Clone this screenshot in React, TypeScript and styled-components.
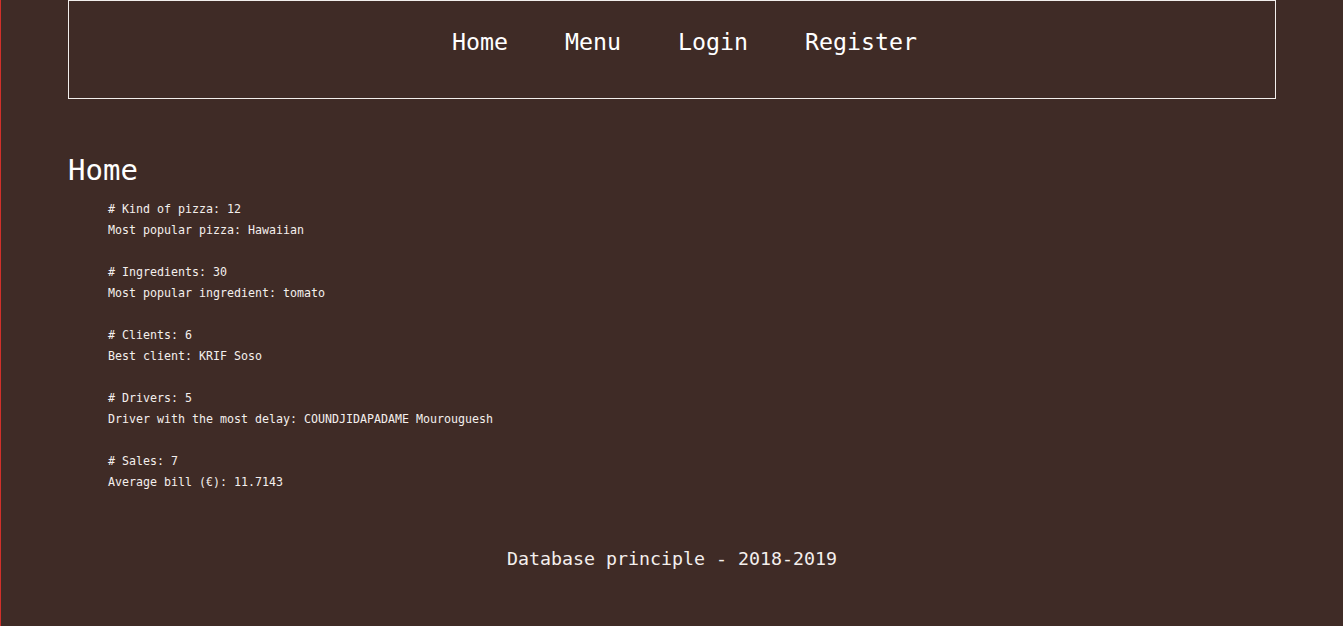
import styled, { createGlobalStyle } from "styled-components";

const GlobalStyle = createGlobalStyle`
  html, body {
    margin: 0;
    padding: 0;
  }

  body {
    background-color: #3f2b26;
    border-left: 1px solid #d0302a;
    min-height: 100vh;
    box-sizing: border-box;
    font-family: "DejaVu Sans Mono", "Liberation Mono", monospace;
    color: #fff;
  }
`;

const Container = styled.div`
  width: 90%;
  margin: 0 auto;
`;

const NavBar = styled.nav`
  box-sizing: border-box;
  height: 99px;
  border: 1px solid #f2eeec;
  padding: 27px 0 0 25px;
  display: flex;
  justify-content: center;
  align-items: flex-start;
  gap: 57px;
`;

const NavLink = styled.a`
  font-size: 23.25px;
  color: #fff;
  text-decoration: none;
  cursor: pointer;
`;

const Title = styled.h1`
  margin: 54px 0 0;
  font-size: 29px;
  font-weight: 400;
  line-height: 34px;
`;

const Stats = styled.div`
  margin: 12px 0 0 40px;
  font-size: 11.63px;
  line-height: 21px;
  color: #f4efed;
`;

const StatGroup = styled.div`
  & + & {
    margin-top: 21px;
  }
`;

const Footer = styled.footer`
  margin-top: 55px;
  text-align: center;
  font-size: 18.27px;
  line-height: 22px;
  color: #f4efed;
  padding-bottom: 40px;
`;

const stats = [
  ["# Kind of pizza: 12", "Most popular pizza: Hawaiian"],
  ["# Ingredients: 30", "Most popular ingredient: tomato"],
  ["# Clients: 6", "Best client: KRIF Soso"],
  ["# Drivers: 5", "Driver with the most delay: COUNDJIDAPADAME Mourouguesh"],
  ["# Sales: 7", "Average bill (€): 11.7143"],
];

export default function App() {
  return (
    <>
      <GlobalStyle />
      <Container>
        <NavBar>
          <NavLink>Home</NavLink>
          <NavLink>Menu</NavLink>
          <NavLink>Login</NavLink>
          <NavLink>Register</NavLink>
        </NavBar>

        <Title>Home</Title>

        <Stats>
          {stats.map((group, index) => (
            <StatGroup key={index}>
              {group.map((line) => (
                <div key={line}>{line}</div>
              ))}
            </StatGroup>
          ))}
        </Stats>

        <Footer>Database principle - 2018-2019</Footer>
      </Container>
    </>
  );
}
